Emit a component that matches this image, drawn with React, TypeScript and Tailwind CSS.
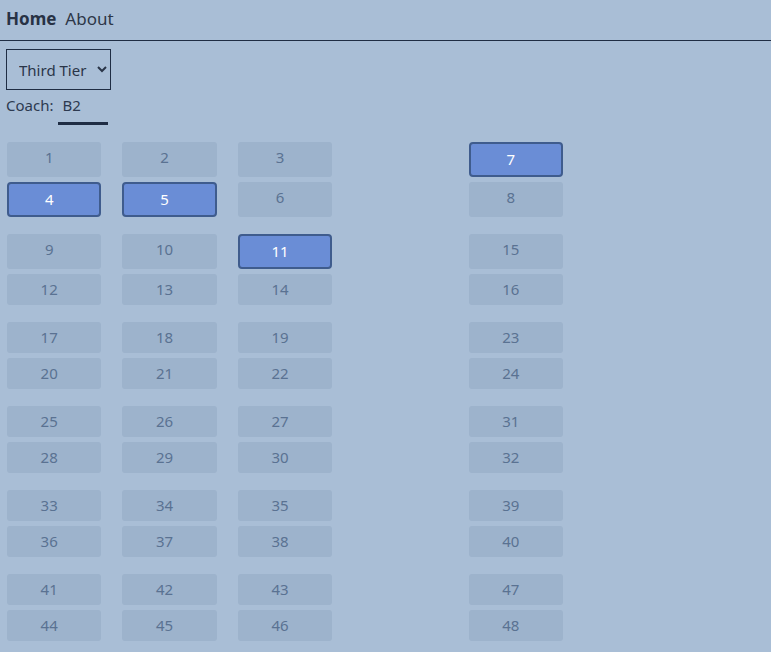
import React, { useState } from "react";

const selectedSeats = [4, 5, 7, 11];

const Seat: React.FC<{ n: number | null; selected: boolean; onClick: () => void }> = ({ n, selected, onClick }) => {
  if (n === null) return <div />;
  return (
    <div
      onClick={onClick}
      className={
        selected
          ? "cursor-pointer rounded-[4px] border-2 border-[#3f5c8d] bg-[#6a8dd6] py-[4px] pr-[10px] text-center text-[15px] leading-[23px] text-white"
          : "cursor-pointer rounded-[3px] bg-[#9db3cc] py-[4px] pr-[10px] text-center text-[15px] leading-[23px] text-[#5a7292]"
      }
    >
      {n}
    </div>
  );
};

const App: React.FC = () => {
  const [tier, setTier] = useState("third");
  const [selected, setSelected] = useState<number[]>(selectedSeats);

  const toggle = (n: number) => {
    setSelected(selected.includes(n) ? selected.filter((s) => s !== n) : [...selected, n]);
  };

  const groups = [0, 1, 2, 3, 4, 5].map((g) => {
    const b = g * 8;
    return [
      [b + 1, b + 2, b + 3, null, b + 7],
      [b + 4, b + 5, b + 6, null, b + 8],
    ];
  });

  return (
    <div className="min-h-[652px] bg-[#a9bed6] font-['Noto_Sans','Open_Sans',sans-serif] text-[#1f2a3c]">
      {/* Nav */}
      <nav className="flex h-[41px] items-center gap-[9px] border-b border-[#1f2d44] px-[6px] pb-[3px] text-[17px]">
        <a className="font-bold text-[#273245]">Home</a>
        <a className="text-[#2d3748]">About</a>
      </nav>

      <div className="px-[6px] pt-[8px]">
        <select
          value={tier}
          onChange={(e) => setTier(e.target.value)}
          className="h-[41px] w-[105px] border border-[#1f2d44] bg-transparent pl-[8px] text-[15px] text-[#2a3548] outline-none"
        >
          <option value="first">First Tier</option>
          <option value="second">Second Tier</option>
          <option value="third">Third Tier</option>
        </select>

        <div className="mt-[3px] flex items-start text-[15px] leading-[24px] text-[#2d3a50]">
          <span>Coach:</span>
          <span className="ml-[5px] w-[50px] border-b-[3px] border-[#1f2d44] pb-[5px] pl-[4px]">B2</span>
        </div>

        {/* Seats */}
        <div className="mt-[17px] flex w-[557px] flex-col gap-[17px] pl-[1px]">
          {groups.map((rows, gi) => (
            <div key={gi} className="grid grid-cols-5 gap-x-[21px] gap-y-[5px]">
              {rows.flat().map((n, i) => (
                <Seat key={i} n={n} selected={n !== null && selected.includes(n)} onClick={() => n !== null && toggle(n)} />
              ))}
            </div>
          ))}
        </div>
      </div>
    </div>
  );
};

export default App;
